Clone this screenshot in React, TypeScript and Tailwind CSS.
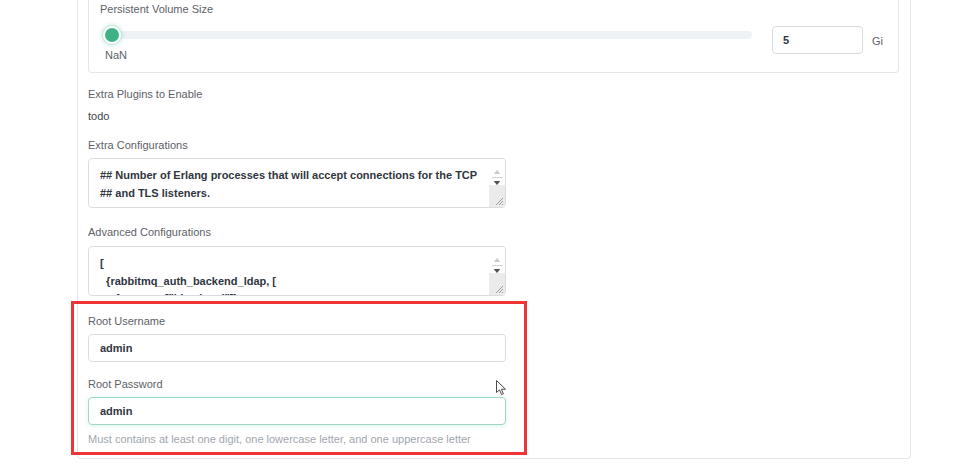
import React from "react";

const FONT = { fontFamily: '"Liberation Sans", Arial, sans-serif' };

function Scrollbar() {
  return (
    <div className="absolute right-0 top-0 bottom-0 w-[16px] flex flex-col">
      <div className="h-[26px] bg-white flex flex-col items-center">
        <svg width="8" height="5" viewBox="0 0 8 5" className="mt-[11px]">
          <path d="M0 5 L4 0 L8 5 Z" fill="#c9cbcf" />
        </svg>
        <div className="w-[11px] h-px bg-[#d4d6d9] mt-[3px]" />
        <svg width="8" height="5" viewBox="0 0 8 5" className="mt-[3px]">
          <path d="M0 0 L4 5 L8 0 Z" fill="#50545a" />
        </svg>
      </div>
      <div className="flex-1 bg-[#ebebeb] relative">
        <svg width="10" height="10" viewBox="0 0 10 10" className="absolute right-[1px] bottom-[1px]">
          <path d="M9 2 L2 9 M9 5 L5 9 M9 8 L8 9" stroke="#9a9a9a" strokeWidth="1" />
        </svg>
      </div>
    </div>
  );
}

function TextArea({ lines }: { lines: string[] }) {
  return (
    <div className="relative h-[50px] w-[418px] border border-[#d9dce1] rounded-[4px] overflow-hidden bg-white">
      <div className="pl-[11px] pt-[8px] pr-[20px] text-[11px] leading-[17.6px] font-bold text-[#303640] whitespace-pre">
        {lines.map((l, i) => (
          <div key={i}>{l}</div>
        ))}
      </div>
      <Scrollbar />
    </div>
  );
}

export default function App() {
  return (
    <div className="w-[976px] h-[472px] bg-white relative overflow-hidden" style={FONT}>
      <div className="ml-[77px] w-[834px] border-x border-b border-[#e4e6e9] rounded-b-[4px] pl-[10px] pr-[11px] pb-[11px]">
        {/* Persistent Volume panel */}
        <div className="border-x border-b border-[#e4e6e9] rounded-b-[4px] pl-[11px] pt-[1px] pb-[9px]">
          <div className="text-[11px] leading-[16px] text-[#5d6168]">Persistent Volume Size</div>
          <div className="flex items-start">
            <div className="flex-1 pl-[5px]">
              <div className="relative mt-[9px] h-[18px] flex items-center">
                <div className="w-full h-[8px] rounded-full bg-[#eef2f7]" />
                <div className="absolute left-[-3px] top-[-1px] w-[20px] h-[20px] rounded-full bg-white border border-[#c4e8d9] flex items-center justify-center shadow-[0_0_4px_rgba(63,177,131,0.35)]">
                  <div className="w-[14px] h-[14px] rounded-full bg-[#3fb186]" />
                </div>
              </div>
              <div className="mt-[3px] text-[11px] leading-[16px] text-[#5d6168]">NaN</div>
            </div>
            <div className="flex items-center mt-[9px] ml-[20px]">
              <div className="w-[91px] h-[28px] border border-[#d9dce1] rounded-[4px] pl-[10px] flex items-center text-[11px] font-bold text-[#303640]">
                5
              </div>
              <div className="ml-[9px] mt-[2px] text-[11px] text-[#5d6168] w-[26px]">Gi</div>
            </div>
          </div>
        </div>

        <div className="mt-[13px] text-[11px] leading-[16px] text-[#5d6168]">Extra Plugins to Enable</div>
        <div className="mt-[6px] text-[11px] leading-[16px] text-[#40444b]">todo</div>

        <div className="mt-[13px] text-[11px] leading-[16px] text-[#5d6168]">Extra Configurations</div>
        <div className="mt-[5px]">
          <TextArea
            lines={[
              "## Number of Erlang processes that will accept connections for the TCP",
              "## and TLS listeners.",
            ]}
          />
        </div>

        <div className="mt-[16px] text-[11px] leading-[16px] text-[#5d6168]">Advanced Configurations</div>
        <div className="mt-[6px]">
          <TextArea lines={["[", "  {rabbitmq_auth_backend_ldap, [", "     {servers, [\"ldap.local\"]},"]} />
        </div>

        <div className="mt-[17px] text-[11px] leading-[16px] text-[#5d6168]">Root Username</div>
        <div className="mt-[5px] w-[418px] h-[28px] border border-[#d9dce1] rounded-[4px] pl-[11px] flex items-center text-[11px] font-bold text-[#303640]">
          admin
        </div>

        <div className="mt-[14px] text-[11px] leading-[16px] text-[#5d6168]">Root Password</div>
        <div className="mt-[5px] w-[418px] h-[28px] border border-[#9fd8c1] rounded-[4px] pl-[11px] flex items-center text-[11px] font-bold text-[#303640] shadow-[0_1px_5px_rgba(63,177,134,0.18)]">
          admin
        </div>

        <div className="mt-[6px] text-[11px] leading-[16px] text-[#a2a6ad]">
          Must contains at least one digit, one lowercase letter, and one uppercase letter
        </div>
      </div>

      {/* red annotation box */}
      <div className="absolute left-[71px] top-[301px] w-[456px] h-[154px] border-[3px] border-[#ee3434]" />

      {/* mouse cursor */}
      <svg className="absolute left-[496px] top-[380px]" width="11" height="17" viewBox="0 0 11 17">
        <path
          d="M0.5 0.5 L0.5 12.5 L3.5 9.8 L5.6 14.6 L7.4 13.8 L5.4 9.2 L9.5 9.2 Z"
          fill="#ffffff"
          stroke="#4a4a4a"
          strokeWidth="1"
          strokeLinejoin="round"
        />
      </svg>
    </div>
  );
}
